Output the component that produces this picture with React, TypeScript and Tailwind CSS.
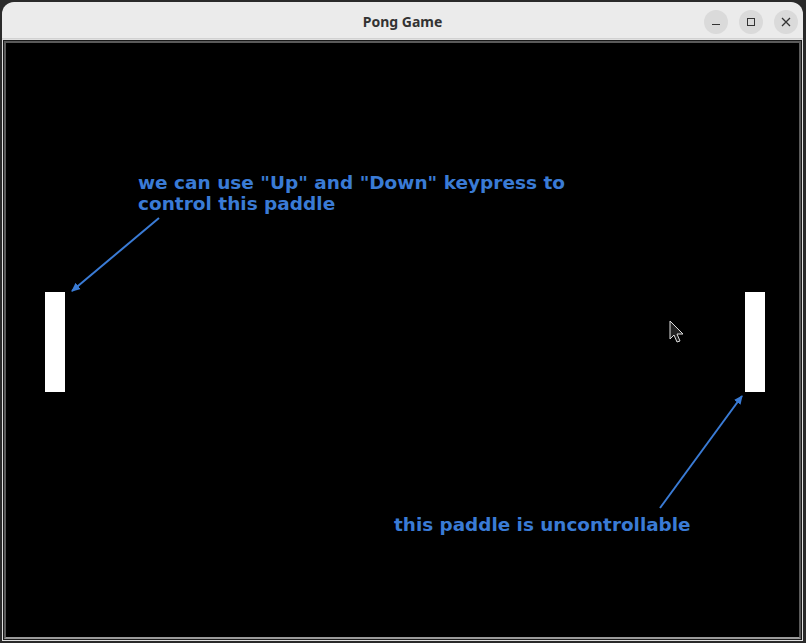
import React from "react";

export default function App() {
  const font = { fontFamily: '"DejaVu Sans", "Liberation Sans", sans-serif' };
  return (
    <div className="w-[806px] h-[643px] bg-[#2a2a2a] pt-[2px] pl-[2px] pr-[3px] pb-[2px] overflow-hidden">
      <div className="h-full flex flex-col rounded-t-[12px] bg-[#ebebeb] overflow-hidden">
        <div className="h-[37px] shrink-0 relative flex items-center justify-center border-b border-[#d2d2d2]">
          <span className="text-[14px] font-bold text-[#333] pt-[3px]" style={{ fontFamily: '"Noto Sans", "DejaVu Sans", sans-serif' }}>
            Pong Game
          </span>
          <div className="absolute right-[5px] top-[8px] flex gap-[11px]">
            <div className="w-[24px] h-[24px] rounded-full bg-[#dadada] flex items-center justify-center">
              <div className="w-[8px] h-[1px] bg-[#333] mt-[5px]" />
            </div>
            <div className="w-[24px] h-[24px] rounded-full bg-[#dadada] flex items-center justify-center">
              <div className="w-[8px] h-[8px] border border-[#333]" />
            </div>
            <div className="w-[24px] h-[24px] rounded-full bg-[#dadada] flex items-center justify-center">
              <svg width="10" height="10" viewBox="0 0 10 10">
                <path d="M1 1 L9 9 M9 1 L1 9" stroke="#333" strokeWidth="1.3" />
              </svg>
            </div>
          </div>
        </div>
        <div className="flex-1 flex bg-[#2a2a2a] border-t border-l border-r border-b border-[#e0e0e0]">
          <div className="flex-1 flex p-[1px] bg-[#1a1a1a]">
            <div className="flex-1 border-2 border-[#5a5a5a] border-b-[#9a9a9a] bg-black relative overflow-hidden" style={font}>
              <div className="absolute left-[39px] top-[249px] w-[20px] h-[100px] bg-white" />
              <div className="absolute left-[739px] top-[249px] w-[20px] h-[100px] bg-white" />
              <svg className="absolute left-0 top-0" width="800" height="600">
                <defs>
                  <marker id="ah" markerWidth="10" markerHeight="10" refX="8" refY="5" orient="auto" markerUnits="userSpaceOnUse">
                    <path d="M0 1 L9 5 L0 9 Z" fill="#3a7bd5" />
                  </marker>
                </defs>
                <line x1="153" y1="175" x2="66" y2="248" stroke="#3a7bd5" strokeWidth="2" markerEnd="url(#ah)" />
                <line x1="654" y1="465" x2="736" y2="353" stroke="#3a7bd5" strokeWidth="2" markerEnd="url(#ah)" />
                <path d="M664 278 L664 296 L668 292 L671 299 L674 298 L671 291 L677 291 Z" fill="#222" stroke="#ddd" strokeWidth="1" />
              </svg>
              <div className="absolute left-[132px] top-[129px] text-[18.5px] leading-[21px] font-bold text-[#3a7bd5] whitespace-pre">
                {'we can use "Up" and "Down" keypress to\ncontrol this paddle'}
              </div>
              <div className="absolute left-[388px] top-[472px] text-[18.4px] leading-[20px] font-bold text-[#3a7bd5] whitespace-pre">
                this paddle is uncontrollable
              </div>
            </div>
          </div>
        </div>
      </div>
    </div>
  );
}
